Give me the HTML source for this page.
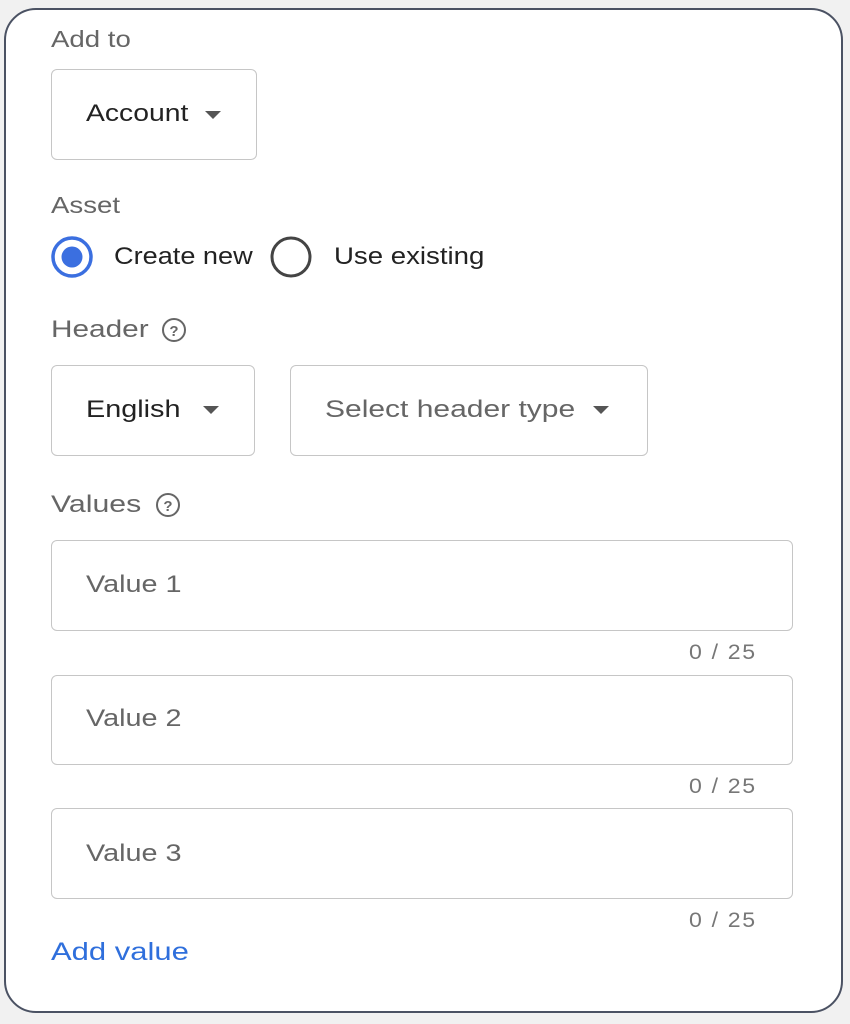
<!DOCTYPE html>
<html><head><style>
body{margin:0;width:850px;height:1024px;background:#f1f1f1;position:relative;overflow:hidden;font-family:"Liberation Sans",Arial,sans-serif}
.card{position:absolute;left:4px;top:8px;width:835px;height:1001px;background:#fff;border:2px solid #4b5263;border-radius:32px}
.t{position:absolute;white-space:nowrap;line-height:1;transform-origin:0 50%;transform:scaleX(1.18)}
.lbl{color:#666;font-size:23px}
.box{position:absolute;border:1.5px solid #c6c6c6;border-radius:6px;background:#fff}
.arr{position:absolute;width:0;height:0;border-left:8px solid transparent;border-right:8px solid transparent;border-top:8px solid #555}
.cnt{color:#777;font-size:21px;letter-spacing:1.5px;transform:scaleX(1.1)}
.val{color:#666;font-size:24px}
</style></head><body>
<div class="card"></div>
<div class="t lbl" style="left:51px;top:28px;transform:scaleX(1.2)">Add to</div>
<div class="box" style="left:51px;top:69px;width:204px;height:89px"></div>
<div class="t" style="left:86px;top:102px;font-size:24px;color:#222">Account</div>
<div class="arr" style="left:205px;top:111px"></div>
<div class="t lbl" style="left:51px;top:194px;transform:scaleX(1.2)">Asset</div>
<svg style="position:absolute;left:48px;top:233px" width="50" height="50"><circle cx="24" cy="24" r="19" fill="none" stroke="#3b6fe0" stroke-width="3.5"/><circle cx="24" cy="24" r="10.5" fill="#3b6fe0"/></svg>
<div class="t" style="left:114px;top:245px;font-size:24px;color:#222;transform:scaleX(1.13)">Create new</div>
<svg style="position:absolute;left:267px;top:233px" width="50" height="50"><circle cx="24" cy="24" r="19" fill="none" stroke="#444" stroke-width="3"/></svg>
<div class="t" style="left:334px;top:245px;font-size:24px;color:#222;transform:scaleX(1.15)">Use existing</div>
<div class="t lbl" style="left:51px;top:318px;font-size:24px;transform:scaleX(1.24)">Header</div>
<svg style="position:absolute;left:161px;top:317px" width="26" height="26"><circle cx="13" cy="13" r="11" fill="none" stroke="#666" stroke-width="2"/><text x="13" y="19" font-size="15" font-family="Liberation Sans" text-anchor="middle" fill="#666" font-weight="bold">?</text></svg>
<div class="box" style="left:51px;top:365px;width:202px;height:89px"></div>
<div class="t" style="left:86px;top:398px;font-size:24px;color:#222;transform:scaleX(1.2)">English</div>
<div class="arr" style="left:203px;top:406px"></div>
<div class="box" style="left:290px;top:365px;width:356px;height:89px"></div>
<div class="t val" style="left:325px;top:398px;transform:scaleX(1.25)">Select header type</div>
<div class="arr" style="left:593px;top:406px"></div>
<div class="t lbl" style="left:51px;top:493px;font-size:24px;transform:scaleX(1.26)">Values</div>
<svg style="position:absolute;left:155px;top:492px" width="26" height="26"><circle cx="13" cy="13" r="11" fill="none" stroke="#666" stroke-width="2"/><text x="13" y="19" font-size="15" font-family="Liberation Sans" text-anchor="middle" fill="#666" font-weight="bold">?</text></svg>
<div class="box" style="left:51px;top:540px;width:740px;height:89px"></div>
<div class="t val" style="left:86px;top:573px;transform:scaleX(1.2)">Value 1</div>
<div class="t cnt" style="left:689px;top:642px">0 / 25</div>
<div class="box" style="left:51px;top:675px;width:740px;height:88px"></div>
<div class="t val" style="left:86px;top:707px;transform:scaleX(1.2)">Value 2</div>
<div class="t cnt" style="left:689px;top:776px">0 / 25</div>
<div class="box" style="left:51px;top:808px;width:740px;height:89px"></div>
<div class="t val" style="left:86px;top:842px;transform:scaleX(1.2)">Value 3</div>
<div class="t cnt" style="left:689px;top:910px">0 / 25</div>
<div class="t" style="left:51px;top:940px;font-size:25px;color:#2f6fdc;transform:scaleX(1.24)">Add value</div>
</body></html>
